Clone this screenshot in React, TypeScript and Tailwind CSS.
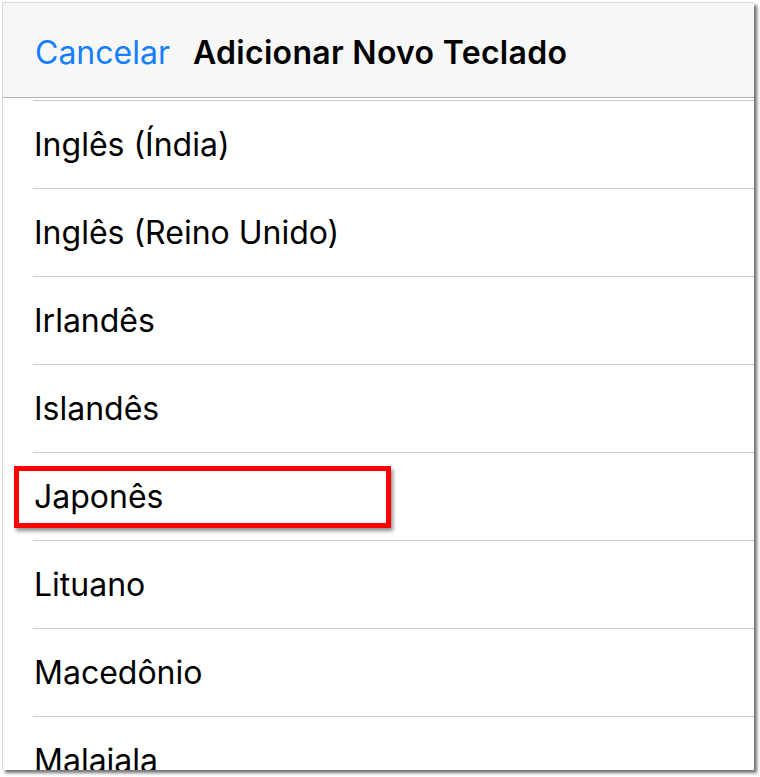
import React from "react";

const items = [
  "Inglês (Índia)",
  "Inglês (Reino Unido)",
  "Irlandês",
  "Islandês",
  "Japonês",
  "Lituano",
  "Macedônio",
  "Malaiala",
];

export default function App() {
  return (
    <div className="w-[760px] h-[777px] bg-white pt-[2px] pl-[2px]" style={{ fontFamily: "Inter, 'Liberation Sans', sans-serif" }}>
      <div className="relative w-[752px] h-[768px] bg-white border-l border-t border-[#d8d8d8] shadow-[3px_3px_3px_rgba(0,0,0,0.55)] overflow-hidden">
        <div className="h-[95px] bg-[#f7f7f7] border-b border-[#b2b2b2] flex items-center pl-[32px] pt-[6px] gap-[23px]">
          <span className="text-[#157efb] text-[32px]">Cancelar</span>
          <span className="text-black text-[32px] font-semibold tracking-[0.3px]">Adicionar Novo Teclado</span>
        </div>
        <div className="h-[2px]" />
        <div className="flex flex-col">
          {items.map((t) => (
            <div key={t} className="pl-[30px]">
              <div className="relative h-[88px] border-t border-[#c8c7cc] flex items-center pl-[1px]">
                <span className="text-[32px] text-black">{t}</span>
                {t === "Japonês" && (
                  <div className="absolute left-[-19px] top-[13px] w-[377px] h-[62px] border-[5px] border-[#ff0000] shadow-[2px_3px_4px_rgba(0,0,0,0.45)]" />
                )}
              </div>
            </div>
          ))}
        </div>
      </div>
    </div>
  );
}
